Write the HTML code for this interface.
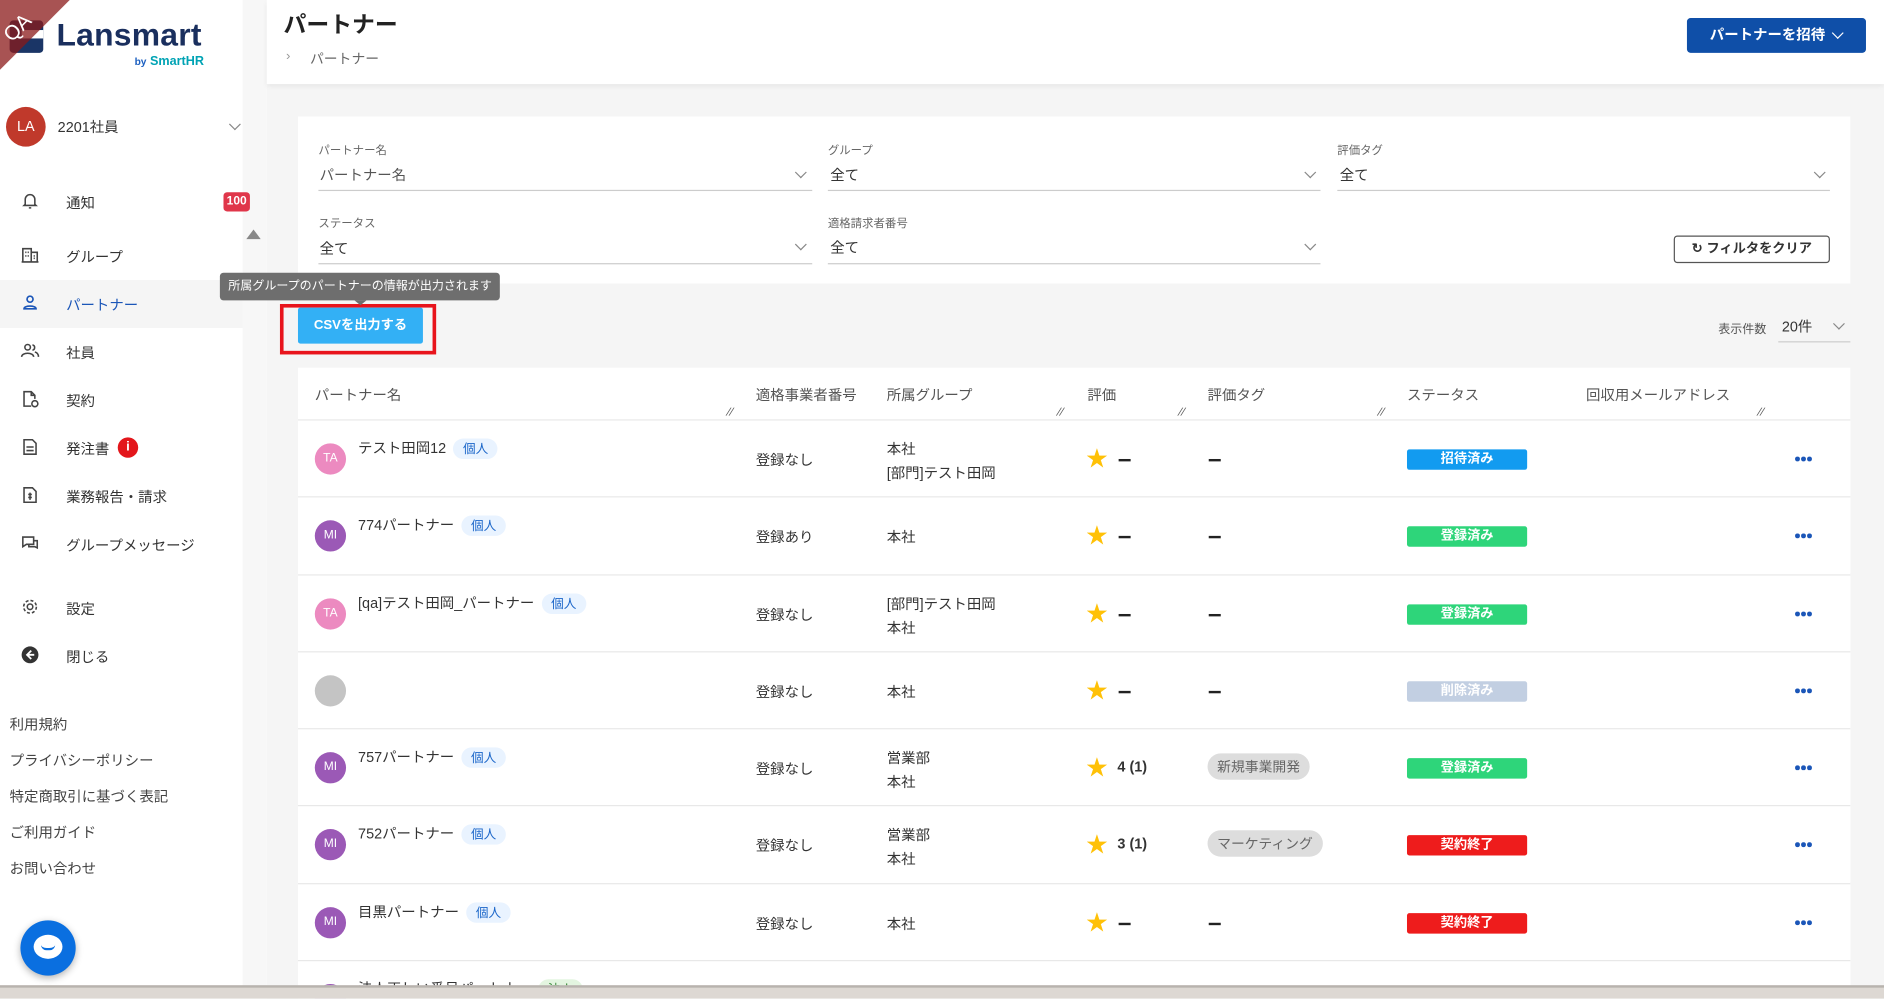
<!DOCTYPE html>
<html><head><meta charset="utf-8"><style>
*{box-sizing:border-box;margin:0;padding:0}
body{width:1884px;height:999px;overflow:hidden;background:#f5f5f5;font-family:"Liberation Sans","Noto Sans CJK JP",sans-serif;color:#333}
#s{position:absolute;left:0;top:0;width:1568px;height:831px;transform:scale(1.20153);transform-origin:0 0;background:#f5f5f5;overflow:hidden}
.a{position:absolute}
.side{left:0;top:0;width:222px;height:831px;background:#fff}
.nav{position:absolute;left:0;width:202px;height:40px;font-size:12px;color:#333}
.nav span{position:absolute;left:55px;top:12px}
.nav svg{position:absolute;left:17px;top:11px}
.foot{position:absolute;left:8px;font-size:12px;color:#444}
.lbl{position:absolute;font-size:9.5px;color:#666}
.sel{position:absolute;height:1px;background:#ccc}
.val{position:absolute;font-size:12px;color:#333}
.chev{position:absolute;width:7px;height:7px;border-right:1.3px solid #888;border-bottom:1.3px solid #888;transform:rotate(45deg)}
.th{position:absolute;top:320px;font-size:12px;color:#555}
.rz{position:absolute;top:338px;font-size:9px;color:#555;transform:skewX(-20deg)}
.row{position:absolute;left:248px;width:1292px;height:64px;border-top:1px solid #e8e8e8;background:#fff}
.av{position:absolute;left:14px;top:19px;width:26px;height:26px;border-radius:50%;color:#fff;font-size:10px;text-align:center;line-height:26px}
.nm{position:absolute;left:50px;top:14px;font-size:12px;color:#333;white-space:nowrap}
.bd{display:inline-block;margin-left:6px;background:#e9f3ff;color:#1b66c9;font-size:10.5px;padding:1px 8px;border-radius:9px}
.c{position:absolute;font-size:12px;color:#333}
.st{position:absolute;left:923px;top:24px;width:100px;height:17px;border-radius:2px;color:#fff;font-size:11px;font-weight:bold;text-align:center;line-height:17px}
.star{position:absolute;left:656px;top:23px;color:#ffc107;font-size:18px;line-height:18px}
.dash{position:absolute;width:10px;height:2px;background:#222}
.dots{position:absolute;left:1246px;top:30px;font-size:0}
.dots i{display:inline-block;width:3.5px;height:3.5px;border-radius:50%;background:#1b56b8;margin-right:1.5px}
.tag{position:absolute;left:757px;top:20px;background:#ddd;color:#666;font-size:11.5px;padding:3px 8px;border-radius:12px}
</style></head><body><div id="s">
<div class="a side"></div>
<div class="a" style="left:202px;top:0;width:20px;height:831px;background:#f7f7f7"></div>
<div class="a" style="left:205px;top:191px;width:0;height:0;border-left:6px solid transparent;border-right:6px solid transparent;border-bottom:8px solid #888"></div>
<!-- logo -->
<div class="a" style="left:8px;top:17px;width:28px;height:27px;background:#1a3566;border-radius:3px"></div>
<div class="a" style="left:18px;top:25px;width:18px;height:7px;background:#fff"></div>
<div class="a" style="left:47px;top:14px;font-size:26.5px;font-weight:bold;color:#1a2f5e;letter-spacing:0.2px">Lansmart</div>
<div class="a" style="left:112px;top:45px;font-size:10.5px;font-weight:bold;color:#00a3b4"><span style="font-size:8.5px;color:#1b5fc0">by</span> SmartHR</div>
<svg class="a" style="left:0;top:0" width="70" height="70"><polygon points="0,0 58,0 0,58" fill="#8b1a1a" fill-opacity="0.75"/><text x="0" y="28" fill="#fff" font-size="17" transform="rotate(-45 14 20)" font-family="Liberation Sans">QA</text></svg>
<!-- user -->
<div class="a" style="left:5px;top:89px;width:33px;height:33px;border-radius:50%;background:#c0392b;color:#fff;font-size:12px;text-align:center;line-height:33px">LA</div>
<div class="a" style="left:48px;top:97px;font-size:12px">2201社員</div>
<div class="chev" style="left:192px;top:100px"></div>
<!-- nav -->
<div class="nav" style="top:148px"><svg width="16" height="16" viewBox="0 0 16 16" fill="none" stroke="#444" stroke-width="1.3"><path d="M4 11V7a4 4 0 0 1 8 0v4l1 1H3zM7 14h2"/></svg><span>通知</span></div>
<div class="a" style="left:186px;top:160px;width:22px;height:16px;background:#e0364a;border-radius:3px;color:#fff;font-size:10px;font-weight:bold;text-align:center;line-height:16px">100</div>
<div class="nav" style="top:193px"><svg width="16" height="16" viewBox="0 0 16 16" fill="none" stroke="#444" stroke-width="1.3"><path d="M2 14V3h7v11M9 6h5v8M1 14h14M4 6h1M6 6h1M4 9h1M6 9h1M11 9h1M11 11h1"/></svg><span>グループ</span></div>
<div class="nav" style="top:233px;background:#f5f5f5;color:#1b56b8"><svg width="16" height="16" viewBox="0 0 16 16" fill="none" stroke="#1b56b8" stroke-width="1.4"><circle cx="8" cy="5" r="2.5"/><path d="M3 13c0-3 10-3 10 0z"/></svg><span>パートナー</span></div>
<div class="nav" style="top:273px"><svg width="16" height="16" viewBox="0 0 16 16" fill="none" stroke="#444" stroke-width="1.3"><circle cx="6" cy="5" r="2.3"/><path d="M1 13c0-4 10-4 10 0M10 3a2.3 2.3 0 0 1 0 4.5M12 9c2 .5 3 2 3 4"/></svg><span>社員</span></div>
<div class="nav" style="top:313px"><svg width="16" height="16" viewBox="0 0 16 16" fill="none" stroke="#444" stroke-width="1.3"><path d="M9 14H3V2h6l3 3v3M9 2v3h3"/><circle cx="12" cy="12" r="2.5"/></svg><span>契約</span></div>
<div class="nav" style="top:353px"><svg width="16" height="16" viewBox="0 0 16 16" fill="none" stroke="#444" stroke-width="1.3"><path d="M3 2h7l3 3v9H3zM5 8h6M5 11h6"/></svg><span>発注書</span></div>
<div class="a" style="left:98px;top:364px;width:17px;height:17px;border-radius:50%;background:#e3161b;color:#fff;font-size:11px;font-weight:bold;text-align:center;line-height:17px">i</div>
<div class="nav" style="top:393px"><svg width="16" height="16" viewBox="0 0 16 16" fill="none" stroke="#444" stroke-width="1.3"><path d="M3 2h7l3 3v9H3zM8 6v6M6.5 7.5h3M6.5 10h3"/></svg><span>業務報告・請求</span></div>
<div class="nav" style="top:433px"><svg width="16" height="16" viewBox="0 0 16 16" fill="none" stroke="#444" stroke-width="1.3"><path d="M2 3h9v6H5l-3 2zM11 6h3v6l-2-1H7V9"/></svg><span>グループメッセージ</span></div>
<div class="nav" style="top:486px"><svg width="16" height="16" viewBox="0 0 16 16" fill="none" stroke="#444" stroke-width="1.3"><circle cx="8" cy="8" r="2.3"/><circle cx="8" cy="8" r="5.3" stroke-dasharray="2.5 1.7"/></svg><span>設定</span></div>
<div class="nav" style="top:526px"><svg width="16" height="16" viewBox="0 0 16 16"><circle cx="8" cy="8" r="7" fill="#333"/><path d="M9 4.5L5.5 8 9 11.5M5.5 8h6" stroke="#fff" stroke-width="1.5" fill="none"/></svg><span>閉じる</span></div>
<div class="foot" style="top:594px">利用規約</div>
<div class="foot" style="top:624px">プライバシーポリシー</div>
<div class="foot" style="top:654px">特定商取引に基づく表記</div>
<div class="foot" style="top:684px">ご利用ガイド</div>
<div class="foot" style="top:714px">お問い合わせ</div>
<div class="a" style="left:17px;top:766px;width:46px;height:46px;border-radius:50%;background:#0a6fe0;box-shadow:0 2px 6px rgba(0,0,0,.3)"></div>
<div class="a" style="left:28px;top:778px;width:24px;height:20px;border-radius:50%;background:#fff"></div>
<div class="a" style="left:34px;top:786px;width:12px;height:5px;border-bottom:2px solid #0a6fe0;border-radius:0 0 6px 6px"></div>
<!-- header -->
<div class="a" style="left:222px;top:0;width:1346px;height:70px;background:#fff;box-shadow:0 2px 4px rgba(0,0,0,.06)"></div>
<div class="a" style="left:236px;top:6px;font-size:19px;font-weight:bold;color:#222">パートナー</div>
<div class="a" style="left:238px;top:41px;font-size:11px;color:#999">›</div>
<div class="a" style="left:258px;top:41px;font-size:11.5px;color:#666">パートナー</div>
<div class="a" style="left:1404px;top:15px;width:149px;height:29px;background:#0f4fa8;border-radius:3px;color:#fff;font-size:12px;font-weight:bold;line-height:29px;padding-left:19px">パートナーを招待</div>
<div class="chev" style="left:1526px;top:24px;border-color:#fff;border-width:1.6px"></div>
<!-- filter -->
<div class="a" style="left:248px;top:97px;width:1292px;height:139px;background:#fff"></div>
<div class="lbl" style="left:265px;top:117px">パートナー名</div><div class="val" style="left:266px;top:137px;color:#555">パートナー名</div><div class="sel" style="left:265px;top:158px;width:411px"></div><div class="chev" style="left:663px;top:140px"></div>
<div class="lbl" style="left:689px;top:117px">グループ</div><div class="val" style="left:691px;top:137px">全て</div><div class="sel" style="left:689px;top:158px;width:410px"></div><div class="chev" style="left:1087px;top:140px"></div>
<div class="lbl" style="left:1113px;top:117px">評価タグ</div><div class="val" style="left:1115px;top:137px">全て</div><div class="sel" style="left:1113px;top:158px;width:410px"></div><div class="chev" style="left:1511px;top:140px"></div>
<div class="lbl" style="left:265px;top:178px">ステータス</div><div class="val" style="left:266px;top:198px">全て</div><div class="sel" style="left:265px;top:219px;width:411px"></div><div class="chev" style="left:663px;top:200px"></div>
<div class="lbl" style="left:689px;top:178px">適格請求者番号</div><div class="val" style="left:691px;top:197px">全て</div><div class="sel" style="left:689px;top:219px;width:410px"></div><div class="chev" style="left:1087px;top:200px"></div>
<div class="a" style="left:1393px;top:196px;width:130px;height:23px;border:1px solid #555;border-radius:3px;font-size:11px;font-weight:bold;text-align:center;line-height:21px;color:#333">↻ フィルタをクリア</div>
<!-- csv -->
<div class="a" style="left:233px;top:253px;width:130px;height:42px;border:3px solid #e8141c"></div>
<div class="a" style="left:248px;top:256px;width:104px;height:30px;background:#33b0f5;border-radius:2px;color:#fff;font-size:11px;font-weight:bold;text-align:center;line-height:30px">CSVを出力する</div>
<div class="a" style="left:183px;top:227px;width:233px;height:23px;background:#6e6e6e;border-radius:3px;color:#fff;font-size:10px;line-height:23px;padding-left:7px;white-space:nowrap">所属グループのパートナーの情報が出力されます</div>
<div class="a" style="left:295px;top:250px;width:0;height:0;border-left:5px solid transparent;border-right:5px solid transparent;border-top:4px solid #6e6e6e"></div>
<div class="a" style="left:1430px;top:265px;font-size:10px;color:#555">表示件数</div>
<div class="a" style="left:1483px;top:263px;font-size:12px">20件</div>
<div class="sel" style="left:1480px;top:284px;width:60px"></div><div class="chev" style="left:1527px;top:266px"></div>
<!-- table -->
<div class="a" style="left:248px;top:306px;width:1292px;height:520px;background:#fff"></div>
<div class="th" style="left:262px">パートナー名</div><div class="th" style="left:629px">適格事業者番号</div><div class="th" style="left:738px">所属グループ</div><div class="th" style="left:905px">評価</div><div class="th" style="left:1005px">評価タグ</div><div class="th" style="left:1171px">ステータス</div><div class="th" style="left:1320px">回収用メールアドレス</div>
<div class="rz" style="left:605px">//</div><div class="rz" style="left:880px">//</div><div class="rz" style="left:981px">//</div><div class="rz" style="left:1147px">//</div><div class="rz" style="left:1463px">//</div>

<div class="row" style="top:349px"><div class="av" style="background:#ec8ac0">TA</div><div class="nm">テスト田岡12<span class="bd">個人</span></div><div class="c" style="left:381px;top:24px">登録なし</div><div class="c" style="left:490px;top:14px;line-height:20px">本社<br>[部門]テスト田岡</div><div class="star">★</div><div class="dash" style="left:683px;top:32px"></div><div class="dash" style="left:758px;top:32px"></div><div class="st" style="background:#129bf0">招待済み</div><div class="dots"><i></i><i></i><i></i></div></div>
<div class="row" style="top:413px"><div class="av" style="background:#9b59b6">MI</div><div class="nm">774パートナー<span class="bd">個人</span></div><div class="c" style="left:381px;top:24px">登録あり</div><div class="c" style="left:490px;top:24px">本社</div><div class="star">★</div><div class="dash" style="left:683px;top:32px"></div><div class="dash" style="left:758px;top:32px"></div><div class="st" style="background:#2ed57a">登録済み</div><div class="dots"><i></i><i></i><i></i></div></div>
<div class="row" style="top:478px"><div class="av" style="background:#ec8ac0">TA</div><div class="nm">[qa]テスト田岡_パートナー<span class="bd">個人</span></div><div class="c" style="left:381px;top:24px">登録なし</div><div class="c" style="left:490px;top:14px;line-height:20px">[部門]テスト田岡<br>本社</div><div class="star">★</div><div class="dash" style="left:683px;top:32px"></div><div class="dash" style="left:758px;top:32px"></div><div class="st" style="background:#2ed57a">登録済み</div><div class="dots"><i></i><i></i><i></i></div></div>
<div class="row" style="top:542px"><div class="av" style="background:#c4c4c4"></div><div class="c" style="left:381px;top:24px">登録なし</div><div class="c" style="left:490px;top:24px">本社</div><div class="star">★</div><div class="dash" style="left:683px;top:32px"></div><div class="dash" style="left:758px;top:32px"></div><div class="st" style="background:#c2cfe2">削除済み</div><div class="dots"><i></i><i></i><i></i></div></div>
<div class="row" style="top:606px"><div class="av" style="background:#9b59b6">MI</div><div class="nm">757パートナー<span class="bd">個人</span></div><div class="c" style="left:381px;top:24px">登録なし</div><div class="c" style="left:490px;top:14px;line-height:20px">営業部<br>本社</div><div class="star">★</div><div class="c" style="left:682px;top:24px;font-weight:bold">4 (1)</div><div class="tag">新規事業開発</div><div class="st" style="background:#2ed57a">登録済み</div><div class="dots"><i></i><i></i><i></i></div></div>
<div class="row" style="top:670px"><div class="av" style="background:#9b59b6">MI</div><div class="nm">752パートナー<span class="bd">個人</span></div><div class="c" style="left:381px;top:24px">登録なし</div><div class="c" style="left:490px;top:14px;line-height:20px">営業部<br>本社</div><div class="star">★</div><div class="c" style="left:682px;top:24px;font-weight:bold">3 (1)</div><div class="tag">マーケティング</div><div class="st" style="background:#ee1c1c">契約終了</div><div class="dots"><i></i><i></i><i></i></div></div>
<div class="row" style="top:735px"><div class="av" style="background:#9b59b6">MI</div><div class="nm">目黒パートナー<span class="bd">個人</span></div><div class="c" style="left:381px;top:24px">登録なし</div><div class="c" style="left:490px;top:24px">本社</div><div class="star">★</div><div class="dash" style="left:683px;top:32px"></div><div class="dash" style="left:758px;top:32px"></div><div class="st" style="background:#ee1c1c">契約終了</div><div class="dots"><i></i><i></i><i></i></div></div>
<div class="row" style="top:799px"><div class="av" style="background:#9b59b6"></div><div class="nm">法人正しい番号パートナー<span class="bd" style="background:#e3f5e0;color:#3a8a3a">法人</span></div></div>
<!-- bottom bar -->
<div class="a" style="left:0;top:820px;width:1568px;height:11px;background:#ddd8d3;border-top:2px solid #b8b3ae"></div>
</div></body></html>
